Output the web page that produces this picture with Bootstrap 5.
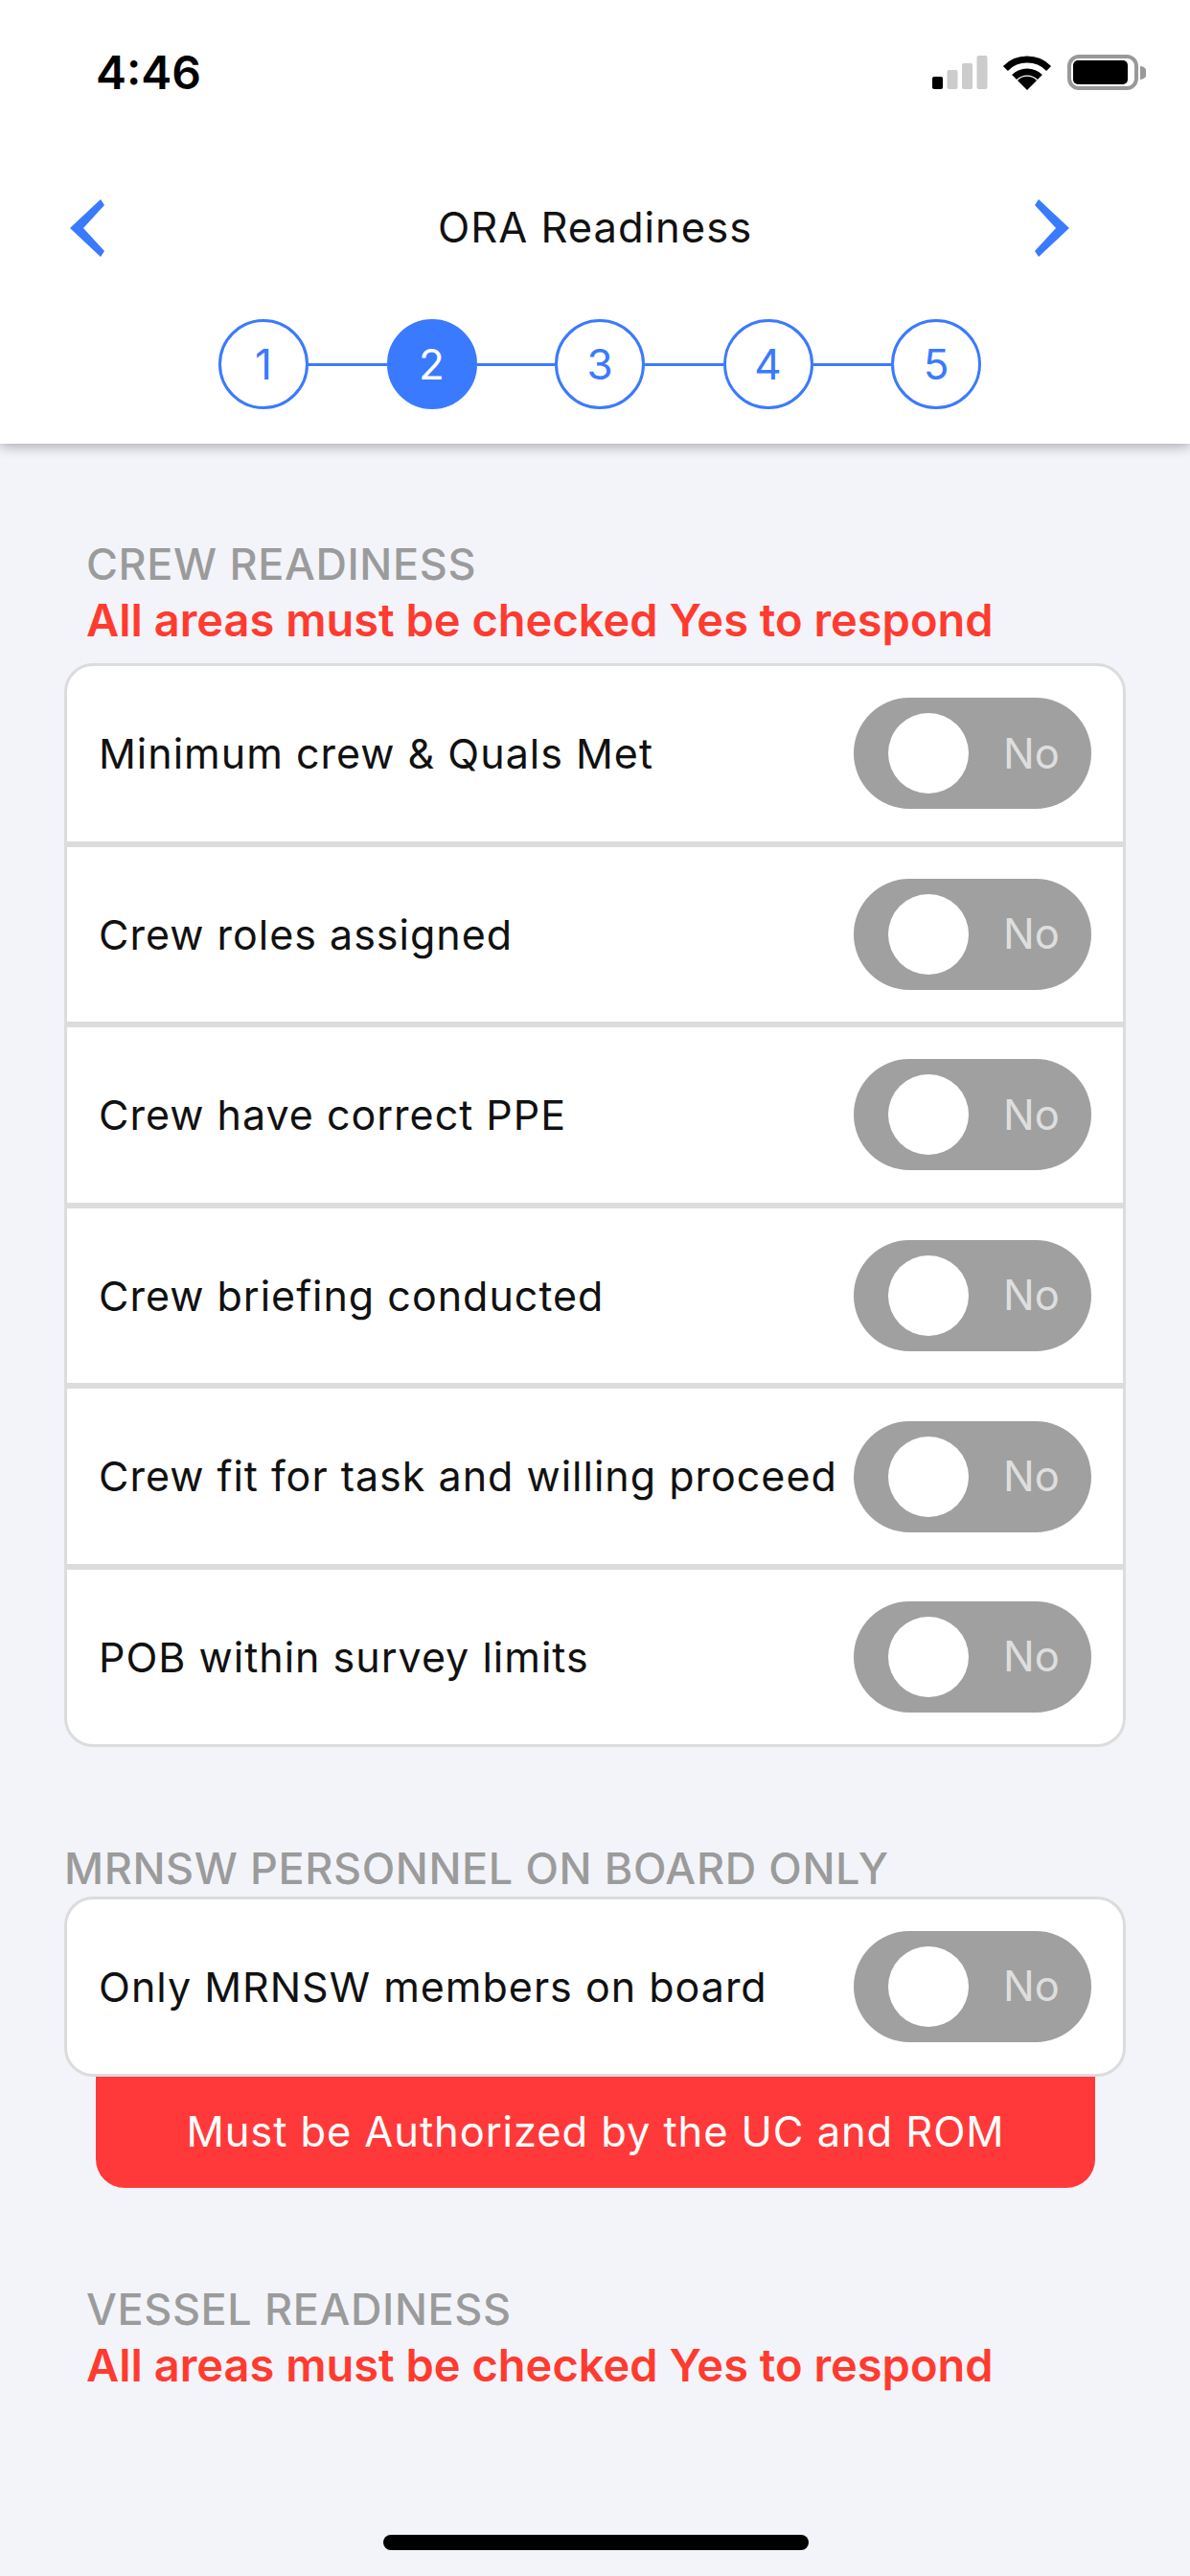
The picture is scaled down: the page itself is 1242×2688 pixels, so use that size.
<!DOCTYPE html>
<html lang="en">
<head>
  <meta charset="UTF-8" />
  <meta name="viewport" content="width=device-width, initial-scale=1.0"/>
  <title>ORA Readiness</title>
  <link href="https://cdn.jsdelivr.net/npm/bootstrap@5.3.0/dist/css/bootstrap.min.css" rel="stylesheet"/>
  <style>
    body {
      font-family: Inter, "Liberation Sans", sans-serif;
      background: #f3f4fa;
      width: 1242px;
      height: 2688px;
      overflow: hidden;
    }

    .top-head {
      height: 463px;
      padding-top: 38px;
      background: #fff;
      box-shadow: 0 3px 12px rgba(0, 0, 0, 0.3);
      position: relative;
    }

    .status-row {
      height: 76px;
      padding: 0 46px 0 100px;
    }

    .clock {
      font-size: 48px;
      font-weight: 600;
      line-height: 1;
      color: #000;
    }

    .title-row {
      height: 60px;
      margin-top: 94px;
      padding: 0 125px 0 72px;
    }

    .title-text {
      font-size: 43.5px;
      letter-spacing: 1px;
      color: #111;
      margin-left: 53px;
    }

    .steps {
      margin-top: 65px;
      padding-left: 228px;
    }

    .step-dot {
      width: 94px;
      height: 94px;
      border: 3px solid #3a7afe;
      border-radius: 50%;
      color: #3a7afe;
      font-size: 44px;
      background: #fff;
      flex: none;
    }

    .step-dot.on {
      background: #3a7afe;
      color: #fff;
    }

    .step-line {
      width: 81.5px;
      height: 3px;
      background: #3a7afe;
      flex: none;
    }

    .sec-title {
      font-size: 45px;
      font-weight: 500;
      line-height: 66px;
      color: #9b9b9b;
      letter-spacing: 0.6px;
    }

    .warn-text {
      font-size: 47px;
      line-height: 50px;
      font-weight: 600;
      color: #ff3b30;
    }

    .crew-head { margin-top: 93px; padding-left: 90px; }
    .vessel-head { margin-top: 94px; padding-left: 90px; }

    .mrnsw-head {
      margin-top: 98px;
      padding-left: 67px;
      line-height: 58px;
    }

    .check-card {
      width: 1108px;
      margin-left: 67px;
      background: #fff;
      border: 3px solid #dcdcdc;
      border-radius: 30px;
      overflow: hidden;
    }

    .crew-card { margin-top: 20px; }

    .check-row {
      height: 188.6px;
      padding: 0 33px;
      border-bottom: 6px solid #dcdcdc;
    }

    .check-row:last-child {
      border-bottom: 0;
      height: 182px;
    }

    .check-label {
      font-size: 43px;
      letter-spacing: 1px;
      color: #111;
      white-space: nowrap;
    }

    .toggle-off {
      width: 248px;
      height: 116px;
      border-radius: 58px;
      background: #a0a0a0;
      padding-left: 36px;
      flex: none;
    }

    .toggle-knob {
      width: 84px;
      height: 84px;
      border-radius: 50%;
      background: #fff;
      flex: none;
    }

    .toggle-word {
      margin-left: 36px;
      font-size: 43.5px;
      color: #dedede;
    }

    .auth-bar {
      width: 1043px;
      height: 116px;
      margin-left: 100px;
      background: #ff3939;
      color: #fff;
      font-size: 43.5px;
      letter-spacing: 0.9px;
      border-radius: 0 0 30px 30px;
    }

    .home-bar {
      width: 444px;
      height: 16px;
      border-radius: 8px;
      background: #000;
      position: absolute;
      left: 400px;
      top: 2645px;
    }
  </style>
</head>
<body>

  <!-- Cabecalho -->
  <header class="top-head">
    <div class="status-row d-flex justify-content-between align-items-center">
      <span class="clock">4:46</span>
      <svg width="226" height="40" viewBox="0 0 226 40">
        <rect x="3" y="24" width="11" height="13" rx="2" fill="#000"/>
        <rect x="18.500" y="17" width="11" height="20" rx="2" fill="#ccc"/>
        <rect x="34" y="10" width="11" height="27" rx="2" fill="#ccc"/>
        <rect x="49.500" y="2" width="11" height="35" rx="2" fill="#ccc"/>
        <path d="M79.400 15.400 A32 32 0 0 1 124.600 15.400" fill="none" stroke="#000" stroke-width="7"/>
        <path d="M88.600 24.600 A19 19 0 0 1 115.400 24.600" fill="none" stroke="#000" stroke-width="7"/>
        <path d="M102 38 L92 28 A14 14 0 0 1 112 28 Z" fill="#000"/>
        <rect x="146" y="3" width="70" height="33" rx="10" fill="none" stroke="#999" stroke-width="4"/>
        <rect x="150" y="7" width="57" height="25" rx="5" fill="#000"/>
        <path d="M220 13 A7 7 0 0 1 220 27 Z" fill="#999"/>
      </svg>
    </div>

    <div class="title-row d-flex justify-content-between align-items-center">
      <svg width="38" height="60" viewBox="0 0 38 60"><polygon points="33,0 37,6 15,30 37,54 33,60 1,30" fill="#3a7afe"/></svg>
      <span class="title-text">ORA Readiness</span>
      <svg width="38" height="60" viewBox="0 0 38 60"><polygon points="5,0 1,6 23,30 1,54 5,60 37,30" fill="#3a7afe"/></svg>
    </div>

    <div class="steps d-flex align-items-center">
      <div class="step-dot d-flex align-items-center justify-content-center">1</div>
      <div class="step-line"></div>
      <div class="step-dot on d-flex align-items-center justify-content-center">2</div>
      <div class="step-line"></div>
      <div class="step-dot d-flex align-items-center justify-content-center">3</div>
      <div class="step-line"></div>
      <div class="step-dot d-flex align-items-center justify-content-center">4</div>
      <div class="step-line"></div>
      <div class="step-dot d-flex align-items-center justify-content-center">5</div>
    </div>
  </header>

  <main>
    <div class="crew-head">
      <div class="sec-title">CREW READINESS</div>
      <div class="warn-text">All areas must be checked Yes to respond</div>
    </div>

    <div class="check-card crew-card">
      <div class="check-row d-flex justify-content-between align-items-center">
        <span class="check-label">Minimum crew &amp; Quals Met</span>
        <div class="toggle-off d-flex align-items-center"><div class="toggle-knob"></div><span class="toggle-word">No</span></div>
      </div>
      <div class="check-row d-flex justify-content-between align-items-center">
        <span class="check-label">Crew roles assigned</span>
        <div class="toggle-off d-flex align-items-center"><div class="toggle-knob"></div><span class="toggle-word">No</span></div>
      </div>
      <div class="check-row d-flex justify-content-between align-items-center">
        <span class="check-label">Crew have correct PPE</span>
        <div class="toggle-off d-flex align-items-center"><div class="toggle-knob"></div><span class="toggle-word">No</span></div>
      </div>
      <div class="check-row d-flex justify-content-between align-items-center">
        <span class="check-label">Crew briefing conducted</span>
        <div class="toggle-off d-flex align-items-center"><div class="toggle-knob"></div><span class="toggle-word">No</span></div>
      </div>
      <div class="check-row d-flex justify-content-between align-items-center">
        <span class="check-label">Crew fit for task and willing proceed</span>
        <div class="toggle-off d-flex align-items-center"><div class="toggle-knob"></div><span class="toggle-word">No</span></div>
      </div>
      <div class="check-row d-flex justify-content-between align-items-center">
        <span class="check-label">POB within survey limits</span>
        <div class="toggle-off d-flex align-items-center"><div class="toggle-knob"></div><span class="toggle-word">No</span></div>
      </div>
    </div>

    <div class="mrnsw-head sec-title">MRNSW PERSONNEL ON BOARD ONLY</div>
    <div class="check-card">
      <div class="check-row d-flex justify-content-between align-items-center">
        <span class="check-label">Only MRNSW members on board</span>
        <div class="toggle-off d-flex align-items-center"><div class="toggle-knob"></div><span class="toggle-word">No</span></div>
      </div>
    </div>
    <div class="auth-bar d-flex align-items-center justify-content-center">Must be Authorized by the UC and ROM</div>

    <div class="vessel-head">
      <div class="sec-title">VESSEL READINESS</div>
      <div class="warn-text">All areas must be checked Yes to respond</div>
    </div>
  </main>

  <div class="home-bar"></div>

  <script src="https://cdn.jsdelivr.net/npm/bootstrap@5.3.0/dist/js/bootstrap.bundle.min.js"></script>
</body>
</html>
